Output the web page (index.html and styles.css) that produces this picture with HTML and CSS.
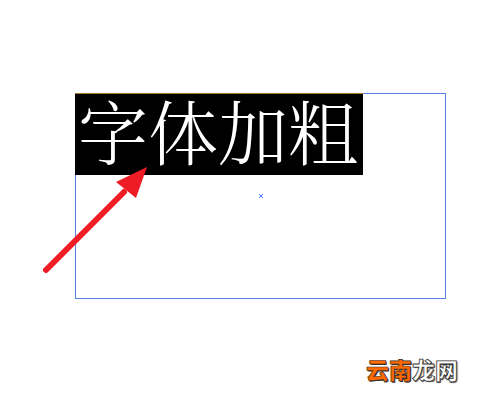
FILE: index.html
```html
<!DOCTYPE html>
<html lang="zh">
<head>
<meta charset="utf-8">
<link rel="stylesheet" href="styles.css">
</head>
<body>
<div class="page">
  <div class="frame">
    <div class="highlight">字体加粗</div>
    <span class="anchor"></span>
  </div>
  <svg class="arrow" width="500" height="400" viewBox="0 0 500 400">
    <line x1="46" y1="270" x2="124" y2="192" stroke="#ee1c25" stroke-width="6" stroke-linecap="round"/>
    <polygon points="147,167 116,182 136,198" fill="#ee1c25"/>
  </svg>
  <div class="mark"><span class="orange">云南</span><span class="white">龙网</span></div>
</div>
</body>
</html>
```
FILE: styles.css
```css
html, body {
  margin: 0;
  padding: 0;
  background: #ffffff;
}
.page {
  position: relative;
  width: 500px;
  height: 400px;
  padding: 93px 0 0 75px;
  box-sizing: border-box;
}
.frame {
  position: relative;
  width: 371px;
  height: 206px;
  border: 1px solid #5b80e6;
  box-sizing: border-box;
}
.highlight {
  width: 288px;
  height: 82px;
  margin: -1px 0 0 -1px;
  border-top: 1px solid #a07a2c;
  box-sizing: border-box;
  background: #000000;
  color: #ffffff;
  font-family: "Noto Serif CJK SC", "Noto Sans CJK SC", serif;
  font-weight: 300;
  font-size: 70px;
  line-height: 72px;
  padding-left: 3px;
  letter-spacing: 0;
  white-space: nowrap;
}
.anchor {
  position: absolute;
  left: 183px;
  top: 100px;
  width: 4px;
  height: 4px;
  background:
    linear-gradient(45deg, transparent 40%, #4a7cff 40%, #4a7cff 60%, transparent 60%),
    linear-gradient(-45deg, transparent 40%, #4a7cff 40%, #4a7cff 60%, transparent 60%);
}
.arrow {
  position: absolute;
  left: 0;
  top: 0;
}
.mark {
  position: absolute;
  left: 366px;
  top: 356px;
  font-family: "Noto Sans CJK SC", sans-serif;
  font-weight: 900;
  font-size: 23px;
  line-height: 26px;
  letter-spacing: 0;
}
.orange {
  color: #ff6a00;
  -webkit-text-stroke: 0.6px #3a2a20;
  text-shadow: 1px 1px 0 #333;
}
.white {
  color: #ffffff;
  -webkit-text-stroke: 0.8px #333333;
  text-shadow: 1px 1px 1px #555;
}
```
